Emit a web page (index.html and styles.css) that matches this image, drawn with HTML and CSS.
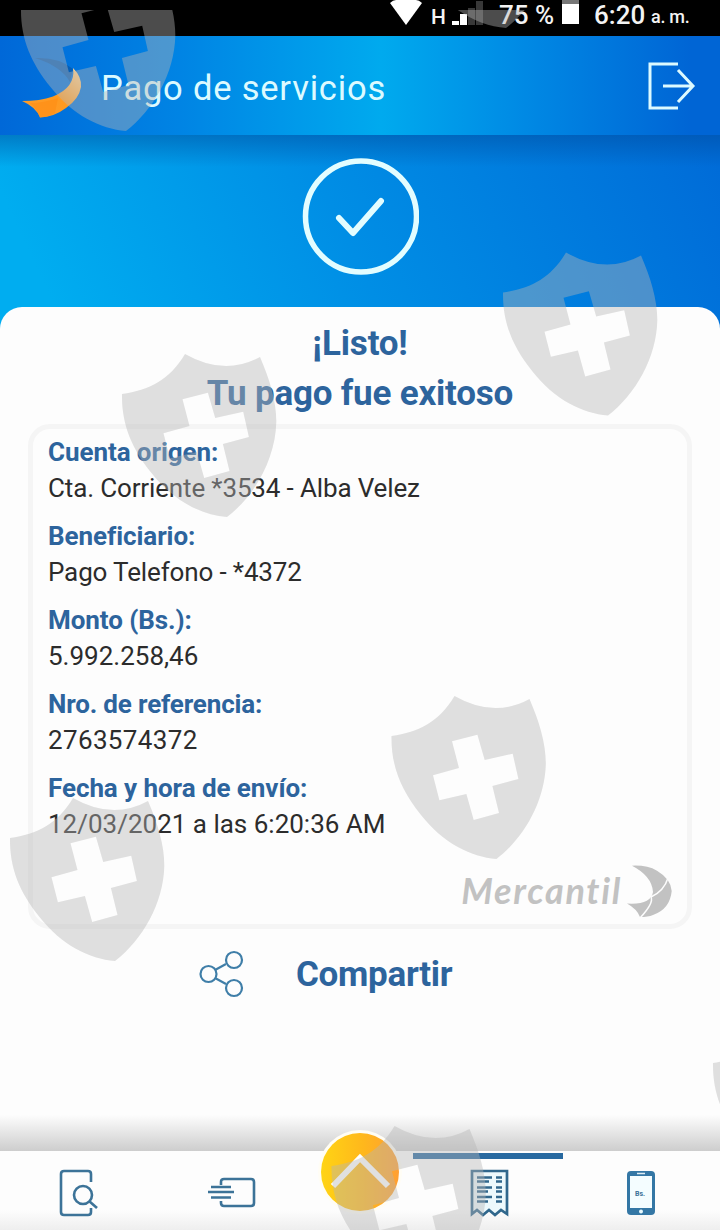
FILE: index.html
```html
<!DOCTYPE html>
<html lang="es">
<head>
  <meta charset="UTF-8" />
  <meta name="viewport" content="width=device-width, initial-scale=1.0" />
  <title>Pago de servicios</title>
  <link rel="stylesheet" href="styles.css">
</head>
<body>
  <div class="pantalla">
    <div class="barra-estado">
      <svg class="wifi" width="32" height="25" viewBox="0 0 32 25"><path d="M0 3Q3 0 6 0H26Q29 0 32 3L16 25Z" fill="#fff"/></svg>
      <span class="red">H</span>
      <svg class="senal" width="32" height="25" viewBox="0 0 32 25">
        <path d="M0 21h7v4H0zM8 14h7v11H8z" fill="#fff"/>
        <path d="M16 8h7v17h-7zM24 1h7v24h-7z" fill="#383838"/>
      </svg>
      <span class="bateria-texto">75 %</span>
      <span class="bateria"></span>
      <span class="hora">6:20</span><span class="ampm">a. m.</span>
    </div>

    <header class="cabecera">
      <svg class="logo" width="62" height="66" viewBox="0 0 62 66">
        <defs>
          <linearGradient id="naranja" x1="0" y1="1" x2="1" y2="0">
            <stop offset="0" stop-color="#ff9d2c"/><stop offset=".5" stop-color="#ff9a20"/><stop offset="1" stop-color="#ffdba0"/>
          </linearGradient>
        </defs>
        <path d="M14 5Q38 4 52 16L49 29Q40 13 14 5Z" fill="#06509e" opacity=".6"/>
        <path d="M52 15Q61 24 60 34Q58 46 45 55Q33 64 19 64.500Q15 54 1 48Q19 48 32 43.500Q55 34 52 15Z" fill="url(#naranja)"/>
        <path d="M9 50Q23 50 37 45L34 60Q27 64 19 64.500Q16 56 9 50Z" fill="#ff8910" opacity=".5"/>
      </svg>
      <h1>Pago de servicios</h1>
      <svg class="salir" width="50" height="50" viewBox="0 0 50 50" fill="none" stroke="#dcfaff" stroke-width="3">
        <path d="M32 2H4V46H32M17 24H47M32 8L47 24L32 40"/>
      </svg>
    </header>

    <section class="resultado">
      <svg width="118" height="118" viewBox="0 0 118 118" fill="none" stroke="#e3fdff" stroke-linecap="round" stroke-linejoin="round">
        <circle cx="60" cy="58.500" r="55.500" stroke-width="5.500"/>
        <path d="M38 60L52 75L80 43" stroke-width="6"/>
      </svg>
    </section>

    <main class="hoja">
      <h2>¡Listo!<br>Tu pago fue exitoso</h2>
      <div class="comprobante">
        <dl>
          <dt>Cuenta origen:</dt>
          <dd class="cuenta">Cta. Corriente *3534 - Alba Velez</dd>
          <dt>Beneficiario:</dt>
          <dd class="cuenta">Pago Telefono - *4372</dd>
          <dt>Monto (Bs.):</dt>
          <dd>5.992.258,46</dd>
          <dt class="referencia">Nro. de referencia:</dt>
          <dd class="numero">2763574372</dd>
          <dt>Fecha y hora de envío:</dt>
          <dd>12/03/2021 a las 6:20:36 AM</dd>
        </dl>
        <div class="marca">
          <span>Mercantil</span>
          <svg width="45" height="55" viewBox="0 0 45 55">
            <path d="M5 1.700Q20 1 30 6.700Q44 15 44.700 27Q43 45 26 51Q21 53 13 53Q10 45 0 39.500Q24 41 26 28Q25 12 5 1.700Z" fill="#c2c2c2"/>
            <path d="M41 14Q37 27 24 33M24 33Q27 39 13 54" fill="none" stroke="#fdfdfd" stroke-width="1.500"/>
          </svg>
        </div>
      </div>
      <div class="compartir">
        <svg width="46" height="48" viewBox="0 0 46 48" fill="none" stroke="#3f7ea8" stroke-width="2.200">
          <path d="M16 20L27 14M16 28L27 34"/>
          <circle cx="9.500" cy="24" r="8"/><circle cx="35" cy="10" r="8"/><circle cx="35" cy="38" r="8"/>
        </svg>
        <span>Compartir</span>
      </div>
    </main>

    <nav class="menu">
      <a class="item">
        <svg width="42" height="50" viewBox="0 0 42 50" fill="none" stroke="#3c7398" stroke-width="2.600">
          <path d="M33 14V6Q33 3 30 3H6Q3 3 3 6V44Q3 47 6 47H30Q33 47 33 44V40"/>
          <circle cx="25" cy="27" r="9"/><path d="M31 33L39 40"/>
        </svg>
      </a>
      <a class="item">
        <svg width="48" height="32" viewBox="0 0 48 32" fill="none" stroke="#3c7398" stroke-width="2.600">
          <path d="M13 8V5Q13 2 16 2H43Q46 2 46 5V26Q46 29 43 29H16Q13 29 13 26V24"/>
          <path d="M3 10H23M0 15H26M3 20.500H23"/>
        </svg>
      </a>
      <a class="item central">
        <svg width="86" height="86" viewBox="0 0 86 86">
          <defs>
            <linearGradient id="dorado"><stop offset="0" stop-color="#ffd414"/><stop offset=".55" stop-color="#ffb71c"/><stop offset="1" stop-color="#ff9f32"/></linearGradient>
          </defs>
          <circle cx="43" cy="43" r="42" fill="#fffdf5"/>
          <circle cx="43" cy="43" r="39" fill="url(#dorado)"/>
          <path d="M16 57L43 29L71 57" fill="none" stroke="#fff" stroke-width="6"/>
        </svg>
      </a>
      <a class="item activo">
        <svg width="40" height="50" viewBox="0 0 40 50" fill="none" stroke="#30678c">
          <path d="M2 46V3H37V46L31 42L25 47L19 42L13 47L7 42Z" stroke-width="2.700" fill="#edf9fc"/>
          <path d="M7 9.500H22M7 13.500H19M7 19.500H22M7 23.500H18M7 29H22M7 33.500H18M26 9.500H32M26 13.500H32M26 19.500H32M26 23.500H32M26 29H32M26 33.500H32" stroke-width="2.600"/>
        </svg>
      </a>
      <a class="item">
        <svg width="28" height="46" viewBox="0 0 28 46">
          <rect x="0" y="1" width="28" height="44" rx="4" fill="#3477a5"/>
          <path d="M3 6H25V38H3Z" fill="#f4fdff"/>
          <path d="M10 3.500H18" stroke="#dfedf4" stroke-width="1.500"/><circle cx="14" cy="41.500" r="2" fill="#e9faff"/>
          <text x="8" y="26" class="bs">Bs.</text>
        </svg>
      </a>
    </nav>

    <svg class="escudos" width="720" height="1230" viewBox="0 0 720 1230">
      <defs>
        <path id="escudo" fill-rule="evenodd" d="M63.500 0Q103 22.500 138.500 3C148 25 155 47 154.800 68C154 105 133 142 105.500 163C80 161 52 147 30 119C10 94 0 70 .5 40C28 36 48 26 63.500 0ZM61 45.300L86.400 38.700L93.700 64L121.700 57.700L127.400 83L101.400 90L108 117L82.700 124L75.400 98L48.400 104.300L42 79.300L68 72Z"/>
        <clipPath id="margen"><rect y="10" width="720" height="1220"/></clipPath>
      </defs>
      <g clip-path="url(#margen)" fill="#b4b4b4" fill-opacity=".42">
        <use href="#escudo" x="20.500" y="-32"/>
        <use href="#escudo" x="400.500" y="-135"/>
        <use href="#escudo" x="502.500" y="252.500"/>
        <use href="#escudo" x="121.500" y="354"/>
        <use href="#escudo" x="391" y="696"/>
        <use href="#escudo" x="9.500" y="798"/>
        <use href="#escudo" x="331" y="1126"/>
        <use href="#escudo" x="712.500" y="1023"/>
      </g>
    </svg>
  </div>
</body>
</html>
```
FILE: styles.css
```css
* { box-sizing: border-box; }
body { margin: 0; font-family: Roboto, "Liberation Sans", sans-serif; background: #fdfdfd; }
svg { display: block; flex: none; }
h1, h2, dl, dd { margin: 0; }

.pantalla {
  position: relative; width: 720px; height: 1230px; overflow: hidden;
  display: flex; flex-direction: column;
}

.barra-estado {
  height: 36px; background: #000; color: #f3f3f3;
  display: flex; align-items: flex-start; padding-left: 390px; white-space: nowrap;
}
.red { font-size: 21px; line-height: 34px; font-weight: 500; margin-left: 9px; width: 22px; }
.senal { margin-left: -1px; }
.bateria-texto { width: 63px; margin-left: 15px; font-size: 26px; line-height: 31px; font-weight: 500; }
.bateria { width: 17px; height: 24px; background: #fff; border-top: 4px solid #777; }
.hora { width: 54px; margin-left: 15px; font-size: 26px; line-height: 31px; font-weight: 500; }
.ampm { margin-left: 3px; font-size: 18px; line-height: 34px; font-weight: 500; letter-spacing: -.3px; }

.cabecera {
  height: 99px; padding: 0 24px 0 21px; color: #dcfaff;
  display: flex; align-items: flex-start;
  background: linear-gradient(90deg, #0068d8 0%, #0084e4 25%, #00aaee 53%, #0089e4 73%, #0065d5 96%);
}
.logo { margin-top: 17px; }
.cabecera h1 { margin: 30px 0 0 18px; font-size: 34.5px; line-height: 44px; font-weight: 400; letter-spacing: .8px; white-space: nowrap; }
.salir { margin: 26px 0 0 auto; }

.resultado {
  height: 195px; padding-top: 23px;
  display: flex; justify-content: center; align-items: flex-start;
  background:
    linear-gradient(rgba(0, 70, 150, .45), rgba(0, 70, 150, 0) 32px),
    linear-gradient(65deg, #00adf0 8%, #008ee5 48%, #006cd8 98%);
}

.hoja {
  flex: 1; margin-top: -23px; padding: 12px 28px 0;
  border-radius: 22px 22px 0 0; background: #fdfdfd; color: #2d649d;
}
.hoja h2 { text-align: center; font-size: 35px; line-height: 50px; font-weight: 700; letter-spacing: -.2px; }
.comprobante {
  height: 505px; margin-top: 5px; padding: 5px 15px 0;
  border: 5px solid #f5f5f5; border-radius: 22px;
}
dt { height: 36px; font-size: 26px; line-height: 36px; font-weight: 700; letter-spacing: -.07px; white-space: nowrap; }
dd { height: 36px; margin-bottom: 12px; font-size: 26px; line-height: 36px; color: #2c2c2c; white-space: nowrap; }
.cuenta { letter-spacing: -.14px; }
.referencia { letter-spacing: -.16px; }
.numero { letter-spacing: .35px; }
.marca {
  margin-top: 22px; height: 55px;
  display: flex; justify-content: flex-end; gap: 5px;
  color: #c2c2c2; font: italic 700 36px/52px Lato, sans-serif;
  font-variant-ligatures: none; letter-spacing: 1.7px;
}
.compartir {
  height: 90px; padding-left: 171px; gap: 51px;
  display: flex; align-items: center; font-size: 35px; font-weight: 700; letter-spacing: -.3px;
}

.menu {
  position: relative; height: 79px; padding: 0 7px;
  display: grid; grid-template-columns: 144px 162px 94px 156px 156px;
  background: linear-gradient(#fdfdfd 75%, #eee);
}
/* sombra sobre el menú inferior */
.menu::before {
  content: ""; position: absolute; left: 0; right: 0; bottom: 100%; height: 36px;
  background: linear-gradient(rgba(205, 205, 205, 0), #cdcdcd);
}
.item { display: flex; justify-content: center; align-items: center; padding-top: 5px; }
.central { position: relative; align-items: flex-start; padding: 0; }
.central svg { margin-top: -22px; }
.activo { margin: 2px 0 0 6px; padding: 0 0 3px 4px; border-top: 6px solid #2869a0; }
.bs { font: 700 7px Roboto, sans-serif; fill: #3c7398; }

.escudos { position: absolute; inset: 0; pointer-events: none; }
```
